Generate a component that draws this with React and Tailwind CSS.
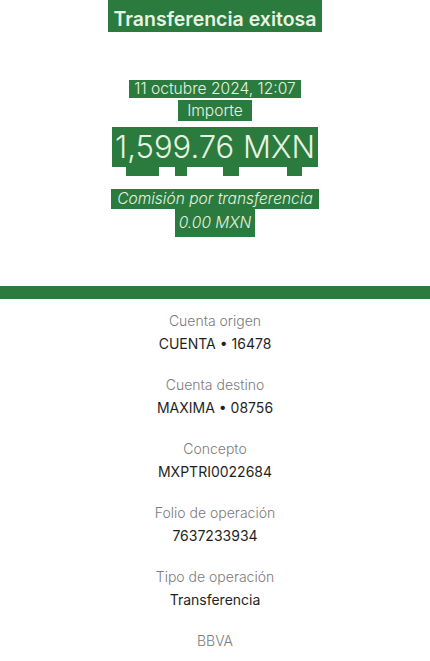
import React from 'react';

const detalles = [
  { label: 'Cuenta origen', value: 'CUENTA • 16478' },
  { label: 'Cuenta destino', value: 'MAXIMA • 08756' },
  { label: 'Concepto', value: 'MXPTRI0022684' },
  { label: 'Folio de operación', value: '7637233934' },
  { label: 'Tipo de operación', value: 'Transferencia' },
];

const Mark = ({ className = '', children }) => (
  <span className={`inline-block bg-[#2b7a3e] text-[#e6f4e2] ${className}`}>{children}</span>
);

const App = () => {
  return (
    <div className="w-[430px] h-[661px] bg-white overflow-hidden font-['Inter',sans-serif]">
      {/* Encabezado */}
      <div className="flex flex-col items-center">
        <Mark className="px-[6px] text-[19.5px] font-semibold leading-[24px] pt-[7px] pb-[1px]">Transferencia exitosa</Mark>
        <div className="mt-[48px] flex flex-col items-center">
          <Mark className="px-[5px] text-[15.6px] font-light leading-[18px]">11 octubre 2024, 12:07</Mark>
          <Mark className="mt-[2px] px-[9px] text-[15.6px] font-light leading-[21px]">Importe</Mark>
          <Mark className="mt-[6px] px-[3px] text-[31px] font-light leading-[40px]">1,599.76 MXN</Mark>
          <div className="w-[210px] h-[9px] flex">
            <span className="ml-[16px] w-[33px] bg-[#2b7a3e]"></span>
            <span className="ml-[16px] w-[12px] bg-[#2b7a3e]"></span>
            <span className="ml-[36px] w-[16px] bg-[#2b7a3e]"></span>
            <span className="ml-[48px] w-[15px] bg-[#2b7a3e]"></span>
          </div>
          <Mark className="mt-[13px] px-[6px] text-[15.5px] font-light italic leading-[20px]">Comisión por transferencia</Mark>
          <Mark className="px-[4px] text-[15.5px] font-light italic leading-[28px]">0.00 MXN</Mark>
        </div>
      </div>

      <div className="mt-[49px] h-[13px] bg-[#2b7a3e]"></div>

      {/* Detalle */}
      <div className="pt-[12px] flex flex-col items-center">
        {detalles.map((d) => (
          <div key={d.label} className="flex flex-col items-center h-[64px]">
            <span className="text-[14px] font-light text-[#7a7a7a] leading-[20px]">{d.label}</span>
            <span className="mt-[3px] text-[14px] text-[#1f1f1f] leading-[20px]">{d.value}</span>
          </div>
        ))}
        <span className="text-[14px] font-light text-[#7a7a7a] leading-[20px]">BBVA</span>
      </div>
    </div>
  );
};

export default App;
